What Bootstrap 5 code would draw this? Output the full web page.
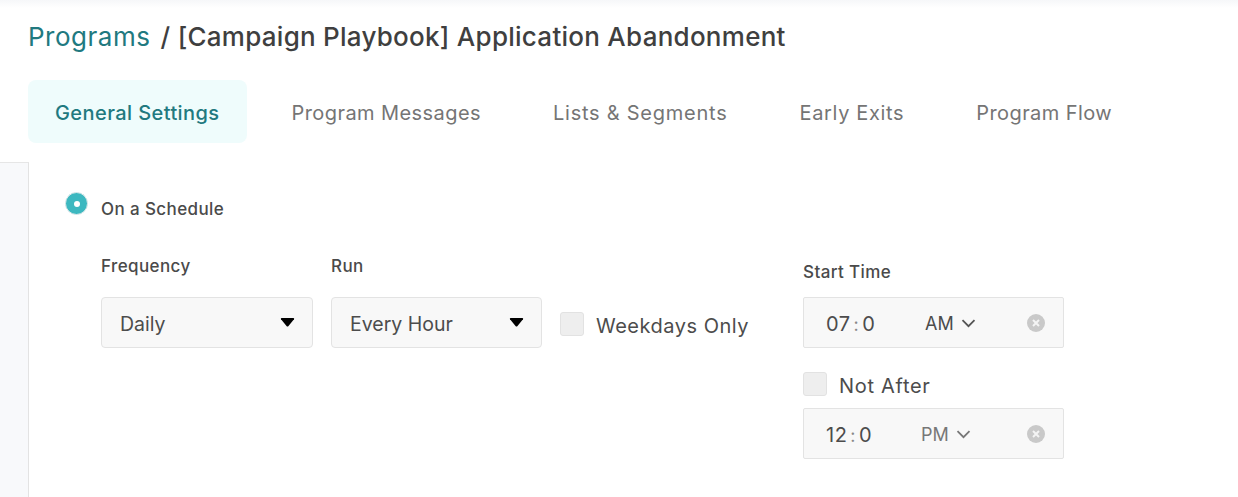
<!DOCTYPE html>
<html lang="en">
<head>
<meta charset="utf-8">
<title>Program settings</title>
<link href="https://cdn.jsdelivr.net/npm/bootstrap@5.3.0/dist/css/bootstrap.min.css" rel="stylesheet">
<style>
html,body{height:497px;overflow:hidden;background:#fff}
body{font-family:Inter,"Liberation Sans",sans-serif;color:#444}
.top-fade{height:8px;background:linear-gradient(#f6f7f9,#fff)}
.page-title{font-size:26px;line-height:32px;font-weight:500;color:#3f3f3f;margin:13px 0 0 28px;letter-spacing:.26px}
.page-title a{color:#21797f;text-decoration:none;font-weight:400;letter-spacing:.5px}
.title-rest{margin-left:3px}
.tabbar{margin:27px 0 0 28px;gap:0}
.tabbar .nav-link{font-size:20px;line-height:66px;padding:0 27px;color:#757575;border-radius:8px;margin-right:18px;height:63px;letter-spacing:.42px}
.tabbar .nav-link.active{background:#effcfc;color:#21797f;font-weight:500}
.tabbar .nav-link.tab-wide{letter-spacing:.76px}
.tabbar .nav-link.tab-mid{letter-spacing:.65px}
.workspace{margin-top:19px}
.rail{width:29px;height:335px;background:#f8f9fb;border-top:1px solid #e6e6e6;border-right:1px solid #e3e3e3;flex:none}
.pane{padding:30px 0 0 36px}
.radio-dot{width:23px;height:23px;border-radius:50%;background:#3db8c0;border:1px solid #dfe9ea;display:flex;align-items:center;justify-content:center;flex:none}
.radio-dot::after{content:"";width:6px;height:6px;border-radius:50%;background:#fff}
.sched-label{font-size:17px;font-weight:500;line-height:24px;color:#4a4a4a;margin:5px 0 0 13px;letter-spacing:.4px}
.fields{margin:33px 0 0 36px}
.fld-label{font-size:17px;font-weight:500;line-height:24px;color:#4a4a4a;display:block;letter-spacing:.4px}
.fld-gap{margin-bottom:19px}
.fld-gap-time{margin-bottom:13px}
.pick{width:212px;height:51px;background:#f8f8f8;border:1px solid #e3e3e3;border-radius:4px;padding:0 17px 0 18px;font-size:19.5px;color:#4c4c4c}
.pick span{padding-top:4px}
.pick-run{width:211px}
.caret-shape{width:15px;height:9px;flex:none}
.tick{width:24px;height:24px;background:#eee;border:1px solid #e2e2e2;border-radius:3px;flex:none}
.tick-text{font-size:20px;line-height:28px;color:#4c4c4c;letter-spacing:.5px}
.tick-text-after{letter-spacing:.7px}
.col-freq{margin-right:18px}
.col-week{width:243px;margin-left:18px;padding-top:58px;gap:12px}
.col-time{padding-top:6px}
.clock{width:261px;height:51px;background:#f8f8f8;border:1px solid #e3e3e3;border-radius:2px;padding:0 18px 0 22px;font-size:20px;color:#4c4c4c}
.clock-num{width:99px;letter-spacing:.5px;padding-top:2px}
.clock-num i{font-style:normal;color:#888;padding:0 3px;font-size:18px}
.ampm{font-size:18px;color:#4c4c4c;width:60px;padding-top:2px}
.ampm.dim{color:#777;margin-left:-4px}
.chev{width:15px;height:9px;margin-left:7px}
.not-after{margin:24px 0 8px}
</style>
</head>
<body>
<div class="top-fade"></div>
<h1 class="page-title"><a href="#">Programs</a> <span class="title-rest">/ [Campaign Playbook] Application Abandonment</span></h1>
<ul class="nav tabbar">
  <li class="nav-item"><a class="nav-link active" href="#">General Settings</a></li>
  <li class="nav-item"><a class="nav-link" href="#">Program Messages</a></li>
  <li class="nav-item"><a class="nav-link tab-wide" href="#">Lists &amp; Segments</a></li>
  <li class="nav-item"><a class="nav-link tab-mid" href="#">Early Exits</a></li>
  <li class="nav-item"><a class="nav-link" href="#">Program Flow</a></li>
</ul>
<div class="workspace d-flex">
  <div class="rail"></div>
  <div class="pane flex-grow-1">
    <div class="d-flex align-items-start">
      <span class="radio-dot"></span>
      <span class="sched-label">On a Schedule</span>
    </div>
    <div class="fields d-flex align-items-start">
      <div class="col-freq">
        <label class="fld-label fld-gap">Frequency</label>
        <div class="pick d-flex align-items-center justify-content-between"><span>Daily</span>
          <svg class="caret-shape" viewBox="0 0 15 9"><path d="M1 1.2Q.3 0 1.8 0H13.2Q14.7 0 14 1.2L8.5 8Q7.5 9 6.5 8Z" fill="#000"/></svg></div>
      </div>
      <div>
        <label class="fld-label fld-gap">Run</label>
        <div class="pick pick-run d-flex align-items-center justify-content-between"><span>Every Hour</span>
          <svg class="caret-shape" viewBox="0 0 15 9"><path d="M1 1.2Q.3 0 1.8 0H13.2Q14.7 0 14 1.2L8.5 8Q7.5 9 6.5 8Z" fill="#000"/></svg></div>
      </div>
      <div class="col-week d-flex align-items-start">
        <span class="tick"></span><span class="tick-text">Weekdays Only</span>
      </div>
      <div class="col-time">
        <label class="fld-label fld-gap-time">Start Time</label>
        <div class="clock d-flex align-items-center">
          <span class="clock-num">07<i>:</i>0</span>
          <span class="ampm d-flex align-items-center">AM<svg class="chev" viewBox="0 0 15 9"><path d="M1.5 1.2 7.5 7.2 13.5 1.2" fill="none" stroke="#555" stroke-width="1.8"/></svg></span>
          <svg class="ms-auto" width="18" height="18" viewBox="0 0 18 18"><circle cx="9" cy="9" r="9" fill="#c9c9c9"/><path d="M6 6 12 12M12 6 6 12" stroke="#f4f4f4" stroke-width="2"/></svg>
        </div>
        <div class="not-after d-flex align-items-start gap-2">
          <span class="tick me-1"></span><span class="tick-text tick-text-after">Not After</span>
        </div>
        <div class="clock d-flex align-items-center">
          <span class="clock-num">12<i>:</i>0</span>
          <span class="ampm dim d-flex align-items-center">PM<svg class="chev" viewBox="0 0 15 9"><path d="M1.5 1.2 7.5 7.2 13.5 1.2" fill="none" stroke="#777" stroke-width="1.8"/></svg></span>
          <svg class="ms-auto" width="18" height="18" viewBox="0 0 18 18"><circle cx="9" cy="9" r="9" fill="#c9c9c9"/><path d="M6 6 12 12M12 6 6 12" stroke="#f4f4f4" stroke-width="2"/></svg>
        </div>
      </div>
    </div>
  </div>
</div>
<script src="https://cdn.jsdelivr.net/npm/bootstrap@5.3.0/dist/js/bootstrap.bundle.min.js"></script>
</body>
</html>
